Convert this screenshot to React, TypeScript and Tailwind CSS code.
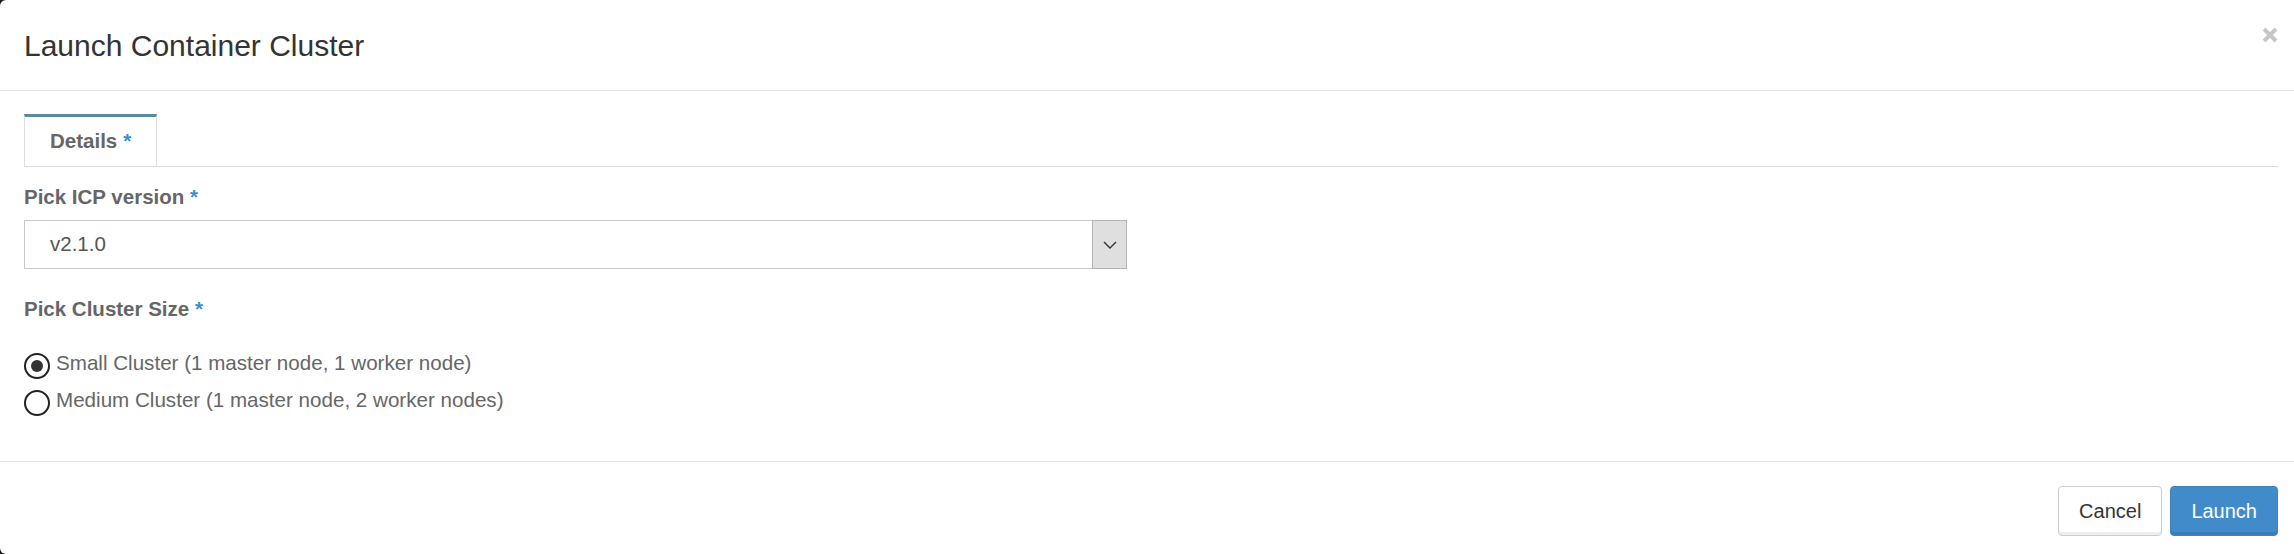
import { useState } from "react";

const sizes = [
  { id: "small", label: "Small Cluster (1 master node, 1 worker node)" },
  { id: "medium", label: "Medium Cluster (1 master node, 2 worker nodes)" },
];

export default function App() {
  const [size, setSize] = useState("small");

  return (
    <div className="h-[554px] w-full bg-[#1c1c1c] font-['Liberation_Sans',Arial,sans-serif]">
      <div className="flex h-full flex-col rounded-l-[6px] bg-white">
        {/* Header */}
        <div className="flex h-[91px] shrink-0 justify-between border-b border-[#e5e5e5] pl-6 pr-4">
          <h4 className="self-center text-[30px] leading-[1.1] text-[#333]">Launch Container Cluster</h4>
          <button className="mt-[27px] h-4 w-4 self-start">
            <svg viewBox="0 0 16 16" className="h-4 w-4">
              <path d="M2 2 L14 14 M14 2 L2 14" stroke="#c7c7c7" strokeWidth="4" strokeLinecap="butt" />
            </svg>
          </button>
        </div>

        {/* Body */}
        <div className="flex-1 pl-6 pr-4 pt-[23px]">
          <div className="flex border-b border-[#ddd]">
            <div className="flex h-[52px] items-center border-x border-t-[3px] border-x-[#ddd] border-t-[#5b8ba0] px-[25px] text-[20.5px] font-bold text-[#666]">
              Details <span className="ml-[6px] text-[#428bca]">*</span>
            </div>
          </div>

          <label className="mt-[16px] block text-[20.5px] font-bold leading-[28px] text-[#666]">
            Pick ICP version <span className="text-[#428bca]">*</span>
          </label>
          <div className="mt-[9px] flex h-[49px] w-[1103px] border border-[#c8c8c8]">
            <div className="flex flex-1 items-center pl-[25px] text-[20.5px] text-[#555]">v2.1.0</div>
            <div className="-my-px -mr-px flex w-[35px] items-center justify-center border border-[#b3b3b3] bg-[#dfdfdf]">
              <svg viewBox="0 0 14 8" className="h-[8px] w-[14px]">
                <path d="M1 1 L7 7 L13 1" fill="none" stroke="#333" strokeWidth="1.4" />
              </svg>
            </div>
          </div>

          <label className="mt-[26px] block text-[20.5px] font-bold leading-[28px] text-[#666]">
            Pick Cluster Size <span className="text-[#428bca]">*</span>
          </label>
          <div className="mt-[21px]">
            {sizes.map((s) => (
              <div
                key={s.id}
                className="flex cursor-pointer items-start text-[20.6px] leading-[37px] text-[#666]"
                onClick={() => setSize(s.id)}
              >
                <span className="mt-[9px] flex h-[26px] w-[26px] items-center justify-center rounded-full border-2 border-[#222]">
                  {size === s.id && <span className="h-3 w-3 rounded-full bg-[#333]" />}
                </span>
                <span className="ml-[6px]">{s.label}</span>
              </div>
            ))}
          </div>
        </div>

        {/* Footer */}
        <div className="flex h-[93px] shrink-0 justify-end gap-2 border-t border-[#e5e5e5] pr-4 pt-[24px]">
          <button className="h-[50px] rounded-[4px] border border-[#ccc] bg-white px-[20px] text-[20px] text-[#333] shadow-[inset_0_-3px_0_#eeeeee]">
            Cancel
          </button>
          <button className="h-[50px] rounded-[4px] border border-[#3c83c3] bg-[#428bca] px-[20px] text-[20px] text-white shadow-[inset_0_-3px_0_#3a7dba]">
            Launch
          </button>
        </div>
      </div>
    </div>
  );
}
